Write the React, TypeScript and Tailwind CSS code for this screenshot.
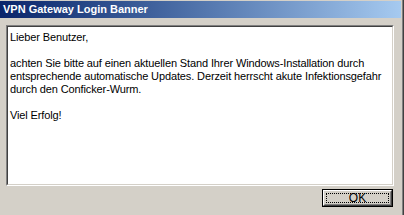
import React from "react";

/**
 * VPN Gateway login banner dialog (Win2000 style)
 */
export default function App() {
  return (
    <div
      className="w-[404px] h-[215px] overflow-hidden bg-[#d4d0c8] border-r border-[#404040]"
      style={{ fontFamily: '"Liberation Sans", Arial, sans-serif' }}
    >
      <div className="h-full border-r border-[#808080] pt-[1px] pr-[1px] flex flex-col">
        {/* Title bar */}
        <div className="h-[17px] flex items-center pl-[3px] bg-gradient-to-r from-[#0a246a] to-[#a6caf0]">
          <span className="text-white font-bold text-[11px] leading-none">VPN Gateway Login Banner</span>
        </div>

        {/* Message box */}
        <div className="mt-[7px] ml-[6px] w-[388px] h-[161px] border border-t-[#808080] border-l-[#808080] border-b-white border-r-white">
          <div className="h-full border border-t-[#404040] border-l-[#404040] border-b-[#d4d0c8] border-r-[#d4d0c8] bg-white pt-[4px] pl-[2px] text-[11px] leading-[13px] tracking-[-0.12px] text-black">
            <p>Lieber Benutzer,</p>
            <p className="mt-[13px]">
              achten Sie bitte auf einen aktuellen Stand Ihrer Windows-Installation durch
              <br />
              entsprechende automatische Updates. Derzeit herrscht akute Infektionsgefahr
              <br />
              durch den Conficker-Wurm.
            </p>
            <p className="mt-[13px]">Viel Erfolg!</p>
          </div>
        </div>

        {/* Buttons */}
        <div className="mt-[3px] flex justify-end pr-[8px]">
          <button className="w-[71px] h-[18px] border border-black bg-[#d4d0c8] p-0">
            <div className="h-full border border-t-white border-l-white border-b-[#404040] border-r-[#404040]">
              <div className="h-full border border-[#d4d0c8] border-b-[#808080] border-r-[#808080] p-[1px]">
                <div className="h-full border border-dotted border-black flex items-center justify-center text-[12px] leading-none text-black">
                  OK
                </div>
              </div>
            </div>
          </button>
        </div>
      </div>
    </div>
  );
}
